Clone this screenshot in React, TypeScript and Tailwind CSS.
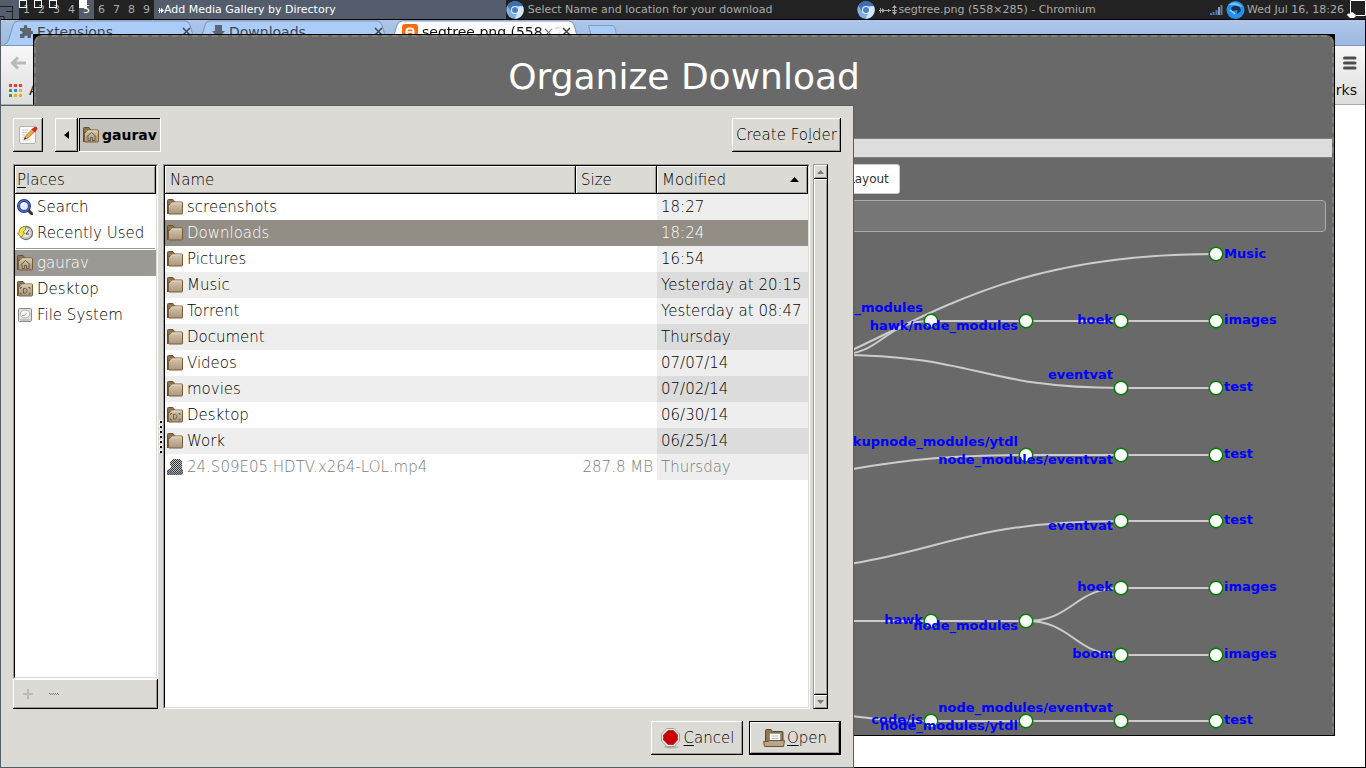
import React from "react";

const BEVEL_OUT =
  "bg-[#dcdad5] shadow-[inset_-1px_-1px_0_#000,inset_1px_1px_0_#fff,inset_-2px_-2px_0_#9e9b95]";

/* ---------- icons ---------- */

type FolderKind = "plain" | "home" | "desktop";

function FolderIcon({ kind = "plain" }: { kind?: FolderKind }) {
  return (
    <svg width="16" height="16" viewBox="0 0 16 16" className="shrink-0" aria-hidden="true">
      <defs>
        <linearGradient id={"folder-" + kind} x1="0" y1="0" x2="0" y2="1">
          <stop offset="0" stopColor="#d6c8b0" />
          <stop offset="1" stopColor="#a8957c" />
        </linearGradient>
      </defs>
      <path d="M.5 14V1.5Q.5.5 1.500.5H6L7.500 2.500V6H.5z" fill="#8f7350" stroke="#6b4f2e" />
      <path d="M3 3.500H7" stroke="#c8ae88" />
      <rect x=".5" y="5.500" width="3" height="9" fill="#84694a" stroke="#6b4f2e" />
      <path d="M1.500 6.500L4.500 3H14.500Q15.500 3 15.500 4V14Q15.500 15 14.500 15H2Q1.500 15 1.500 14z" fill={"url(#folder-" + kind + ")"} stroke="#7d5a30" />
      <path d="M5 4H14.500" stroke="#e6dcc8" />
      {kind === "home" && (
        <path d="M3.500 10L8.500 5.500 13.500 10M5 9.500V13.500H7.500V10.500H9.500V13.500H12V9.500" fill="none" stroke="#6d5c46" />
      )}
      {kind === "desktop" && (
        <path d="M3.500 8V6.500H5M11.500 6.500H13V8M3.500 11.500V13H5M11.500 13H13V11.500M6.500 7.500H8.500Q10 8 10 9.500 10 11.500 8.500 12H6.500z" fill="none" stroke="#6d5c46" />
      )}
    </svg>
  );
}

function SearchIcon() {
  return (
    <svg width="16" height="16" viewBox="0 0 16 16" className="shrink-0" aria-hidden="true">
      <path d="M11 11L15 15" stroke="#333" strokeWidth="3" strokeLinecap="round" />
      <circle cx="7" cy="7" r="5.500" fill="#dfe8f5" stroke="#20306e" strokeWidth="3" />
      <circle cx="7" cy="7" r="5.500" fill="none" stroke="#4a66c4" strokeWidth="1.500" />
      <path d="M4.500 7Q5 4.500 7.500 4.500" fill="none" stroke="#fff" strokeWidth="1.500" />
    </svg>
  );
}

function RecentIcon() {
  return (
    <svg width="16" height="16" viewBox="0 0 16 16" className="shrink-0" aria-hidden="true">
      <circle cx="9" cy="8" r="6.500" fill="#e4e4e0" stroke="#70726e" strokeWidth="1.300" />
      <circle cx="9" cy="8" r="5" fill="none" stroke="#b8bab4" />
      <path d="M9 9L12 5M9 9H12" stroke="#444" />
      <path d="M.5 8L4 12 8 8H6Q6 5.500 8.500 5V1.500Q2 2 2 8z" fill="#f4e04a" stroke="#a08a10" strokeWidth=".8" />
    </svg>
  );
}

function DriveIcon() {
  return (
    <svg width="16" height="16" viewBox="0 0 16 16" className="shrink-0" aria-hidden="true">
      <rect x="1.500" y="1.500" width="13" height="13" rx="1" fill="#e0e0de" stroke="#8a8c88" />
      <ellipse cx="8" cy="7" rx="4.800" ry="4" fill="#f6f6f5" stroke="#b4b6b2" />
      <path d="M5 8.500Q8 9.500 9.500 6" fill="none" stroke="#9a9c98" />
      <path d="M3 13H13" stroke="#a9aba7" />
    </svg>
  );
}

function VideoIcon() {
  return (
    <svg width="16" height="16" viewBox="0 0 16 16" className="shrink-0" aria-hidden="true">
      <defs>
        <pattern id="stipple" width="2" height="2" patternUnits="userSpaceOnUse">
          <rect width="2" height="2" fill="#c4c4c4" />
          <rect width="1" height="1" fill="#333" />
          <rect x="1" y="1" width="1" height="1" fill="#333" />
        </pattern>
      </defs>
      <path d="M3 3L6 0H12L15 3V8L16 11V14L14 16H0V11L4 9z" fill="url(#stipple)" shapeRendering="crispEdges" />
      <path d="M0 11L9 13 16 11V14L14 16H0z" fill="#5b6880" opacity=".5" />
    </svg>
  );
}

function PencilIcon() {
  return (
    <svg width="20" height="20" viewBox="0 0 20 20" aria-hidden="true">
      <rect x="1.500" y="1.500" width="16" height="17" rx="1.500" fill="#fafafa" stroke="#b4b4b0" />
      <path d="M4 5H10M4 7.500H9M4 10H7M4 12.500H6M4 15H12" stroke="#cfcfcd" />
      <path d="M6 14.500L7.500 11 15 3.500 17.500 6 10 13z" fill="#f4a840" stroke="#a8621a" strokeWidth=".7" />
      <path d="M6 14.500L7 12 8.500 13.500z" fill="#333" />
      <path d="M14 4.500L16 2.500Q18 1.500 19 3 19.500 4.500 16.500 7z" fill="#d92b2b" stroke="#a01515" strokeWidth=".6" />
    </svg>
  );
}

function StopIcon() {
  return (
    <svg width="22" height="22" viewBox="0 0 22 22" aria-hidden="true">
      <ellipse cx="11" cy="20" rx="7" ry="1.500" fill="#b3b1ac" />
      <path d="M7 1.500H14L19.500 7V14L14 19.500H7L1.500 14V7z" fill="#f4f4f2" stroke="#a0a09c" />
      <path d="M8 3.500H13.500L17.500 8V13L13.500 17.500H8L3.500 13V8z" fill="#cc0000" stroke="#a00000" strokeWidth=".6" />
    </svg>
  );
}

function OpenIcon() {
  return (
    <svg width="22" height="22" viewBox="0 0 22 22" aria-hidden="true">
      <path d="M2.500 18V3.500Q2.500 2.500 3.500 2.500H8L9.500 4.500H19Q20 4.500 20 5.500V17z" fill="#8e7555" stroke="#5e482d" />
      <path d="M6.500 6.500H17.500V15H6.500z" fill="#fff" stroke="#9a9a96" />
      <path d="M8.500 9H15.500M8.500 11.500H15.500" stroke="#b8b8b4" />
      <path d="M.5 14.500H5L6.500 13.500H21.500L20.500 19.500H1.500z" fill="#b9a68a" stroke="#6d5638" />
    </svg>
  );
}

function ChromiumIcon() {
  return (
    <svg width="18" height="18" viewBox="0 0 18 18" className="shrink-0" aria-hidden="true">
      <circle cx="9" cy="9" r="8.700" fill="#7fb0e0" />
      <path d="M9 9V.3A8.700 8.700 0 0 0 1.400 4.800L5.500 11z" fill="#4275b6" />
      <path d="M1.400 4.800A8.700 8.700 0 0 1 16.800 5.200H9z" fill="#3d6eb0" />
      <path d="M16.800 5.200A8.700 8.700 0 0 1 8.500 17.700L12.500 10V5.200z" fill="#d5e6f7" />
      <circle cx="9" cy="9" r="4" fill="#eef5fc" />
      <circle cx="9" cy="9" r="3" fill="#4a7fc4" />
    </svg>
  );
}

/* ---------- status bar ---------- */

const TAGS = [
  { n: 1, mark: "open" },
  { n: 2, mark: "open" },
  { n: 3, mark: "open" },
  { n: 4, mark: "" },
  { n: 5, mark: "full" },
  { n: 6, mark: "" },
  { n: 7, mark: "" },
  { n: 8, mark: "" },
  { n: 9, mark: "" },
];

function StatusBar() {
  return (
    <header className="flex h-[19px] items-stretch bg-[#222222] text-[11px] leading-[18px] text-[#aaaaaa]">
      <button aria-label="Layout" className="w-[19px] bg-[#535d6c]">
        <svg width="19" height="19" viewBox="0 0 19 19" aria-hidden="true">
          <path d="M0 6.500H13M12.500 6V19M6 11.500H13M0 16.500H4V19" fill="none" stroke="#222" />
        </svg>
      </button>
      <nav className="flex" aria-label="Tags">
        {TAGS.map((t) => (
          <button
            key={t.n}
            className={
              t.mark === "full"
                ? "relative w-[15px] bg-[#535d6c] text-center text-white"
                : "relative w-[15px] text-center"
            }
          >
            {t.mark === "open" && <span className="absolute left-0 top-0 h-2 w-2 border border-white" />}
            {t.mark === "full" && <span className="absolute left-0 top-0 h-2 w-2 bg-white" />}
            {t.n}
          </button>
        ))}
      </nav>
      <div className="flex min-w-0 flex-1">
        <button className="flex min-w-0 flex-1 items-center overflow-hidden bg-[#535d6c] whitespace-nowrap text-white">
          <svg width="10" height="8" viewBox="0 0 10 8" className="shrink-0" aria-hidden="true">
            <path d="M4 4.500H8M5.500 2V7M7.500 2.500V6.500" stroke="#fff" fill="none" />
            <path d="M7 2L10 4.500 7 7z" fill="#fff" />
          </svg>
          Add Media Gallery by Directory
        </button>
        <button className="flex min-w-0 flex-1 items-center gap-1 overflow-hidden whitespace-nowrap">
          <ChromiumIcon />
          <span>Select Name and location for your download</span>
        </button>
        <button className="flex min-w-0 flex-1 items-center gap-1 overflow-hidden whitespace-nowrap">
          <ChromiumIcon />
          <span className="flex items-center">
            <svg width="19" height="10" viewBox="0 0 19 10" aria-hidden="true">
              <path d="M0 5.500H12M1.500 3V8M9.500 4V7M15.500 1V9M13 5.500H18" stroke="#aaa" fill="none" />
              <path d="M3 3L6 5.500 3 8zM13 3L15.500 0 18 3zM13 7L15.500 10 18 7z" fill="#aaa" />
            </svg>
            segtree.png (558×285) - Chromium
          </span>
        </button>
      </div>
      <div className="flex items-center whitespace-nowrap">
        <svg width="17" height="14" viewBox="0 0 17 14" aria-hidden="true">
          <path d="M2 12V10M4.500 12V9M7.500 12V7" stroke="#4a78c0" strokeWidth="2" />
          <path d="M10 12V4" stroke="#7f9fd0" strokeWidth="2" />
          <path d="M12.500 12V2" stroke="#777" strokeWidth="2" />
        </svg>
        <svg width="19" height="18" viewBox="0 0 19 18" aria-hidden="true">
          <circle cx="9.500" cy="9" r="9" fill="#2492e8" />
          <path d="M5 7Q9 3 14 6.500L15 10 11 13 11.500 9 6 10z" fill="#17304f" />
          <path d="M2 4Q9 -2 17 6L9 4z" fill="#6cc4fa" />
          <path d="M4 9L9 13" stroke="#9bd4fa" strokeWidth="1.500" />
        </svg>
        <time className="pl-[2px]">Wed Jul 16, 18:26</time>
        <svg width="22" height="19" viewBox="0 0 22 19" className="self-start" aria-hidden="true">
          <path d="M6.500 13V.5H21.500V15.500H12" fill="none" stroke="#fff" />
          <path d="M3 15Q3 13 6 13.500 8 11 10 13.500 12 14 12 16L10 18H6z" fill="#fff" />
        </svg>
      </div>
    </header>
  );
}

/* ---------- browser behind ---------- */

function Tab({ title, active, icon }: { title: string; active?: boolean; icon: React.ReactNode }) {
  return (
    <div className="relative -mr-2 flex h-[25px] w-[200px] items-center pb-[2px]">
      <svg
        className="absolute inset-0 h-full w-full"
        viewBox="0 0 200 25"
        preserveAspectRatio="none"
        aria-hidden="true"
      >
        <path
          d="M0 25Q4 23 5 19L9 5Q10 1 14 1H181Q185 1 186 5L190 19Q191 23 195 25"
          fill={active ? "#fbfbfb" : "#abccf7"}
          stroke="#7e93b4"
        />
      </svg>
      <button
        className={
          active
            ? "relative ml-[14px] flex w-[160px] items-center gap-1 overflow-hidden mask-r-from-85% text-left text-[14px] leading-[20px] whitespace-nowrap text-[#111]"
            : "relative ml-4 flex w-[162px] items-center gap-1 text-left text-[14px] leading-[20px] whitespace-nowrap text-[#3c4656]"
        }
      >
        {icon}
        {title}
      </button>
      <button aria-label={"Close " + title} className="relative w-3">
        <svg width="9" height="9" viewBox="0 0 9 9" aria-hidden="true">
          <path d="M1 1L8 8M8 1L1 8" stroke="#444" strokeWidth="1.500" />
        </svg>
      </button>
    </div>
  );
}

const APP_COLORS = [
  "bg-[#ee3b33]", "bg-[#ee3b33]", "bg-[#ee3b33]",
  "bg-[#3b9b50]", "bg-[#2a88f5]", "bg-[#f5a913]",
  "bg-[#3b9b50]", "bg-[#f5a913]", "bg-[#f5a913]",
];

function Browser() {
  return (
    <section className="flex flex-1 flex-col border border-black border-l-[#535d6c] bg-white" aria-label="Chromium">
      <div className="flex h-[25px] items-stretch bg-linear-to-b from-[#aec7ea] to-[#9db9e0] pl-[3px]">
        <Tab
          title="Extensions"
          icon={
            <svg width="13" height="13" viewBox="0 0 13 13" aria-hidden="true">
              <path d="M0 3H4Q3 0 5.500 0T7 3H11V6Q13 5 13 7.500T11 9V13H7.500Q8 10.500 6 10.500T4.500 13H0V9Q2.500 9.500 2.500 7.500T0 6z" fill="#5b6470" />
            </svg>
          }
        />
        <Tab
          title="Downloads"
          icon={
            <svg width="13" height="13" viewBox="0 0 13 13" aria-hidden="true">
              <path d="M3 0H10V6H13L6.500 13 0 6H3z" fill="#5b6470" />
            </svg>
          }
        />
        <Tab
          active
          title="segtree.png (558×285)"
          icon={
            <svg width="16" height="16" viewBox="0 0 16 16" className="shrink-0" aria-hidden="true">
              <rect width="16" height="16" rx="3" fill="#fb6b0a" />
              <rect x="4.500" y="4.500" width="7" height="7" rx="2.500" fill="none" stroke="#fff" strokeWidth="2" />
              <path d="M5 8H11" stroke="#fff" strokeWidth="1.500" />
            </svg>
          }
        />
        <svg width="30" height="18" viewBox="0 0 30 18" className="ml-2 mt-1" aria-hidden="true">
          <path d="M.5 1.500H24Q26 1.500 27 4L29.500 15Q29.500 17 27 17H7Q5 17 4 14z" fill="#a9cbf7" stroke="#7e9cc6" />
        </svg>
      </div>
      <div className="flex h-[60px] flex-col border-y border-t-[#7f97bc] border-b-[#a9a9a9] bg-linear-to-b from-[#f8f8f8] to-[#dddddd] text-[14px] leading-[20px] text-[#111]">
        <div className="flex h-[34px] items-center justify-between px-2">
          <button aria-label="Back" className="ml-px">
            <svg width="18" height="14" viewBox="0 0 18 14" aria-hidden="true">
              <path d="M16 7H3M8 1.500L2.500 7 8 12.500" fill="none" stroke="#b9b9b9" strokeWidth="3" />
            </svg>
          </button>
          <button aria-label="Menu">
            <svg width="14" height="14" viewBox="0 0 14 14" aria-hidden="true">
              <path d="M1.500 2H12M1.500 7H12M1.500 12H12" stroke="#4d4d4d" strokeWidth="3" strokeLinecap="round" />
            </svg>
          </button>
        </div>
        <div className="flex items-center justify-between px-2">
          <button className="flex items-center gap-[7px]">
            <span className="grid grid-cols-3 gap-[2px]">
              {APP_COLORS.map((c, i) => (
                <span key={i} className={"h-[3px] w-[3px] " + c} />
              ))}
            </span>
            Apps
          </button>
          <button>Other bookmarks</button>
        </div>
      </div>
    </section>
  );
}

/* ---------- organizer window ---------- */

type Pt = [number, number];

const LINKS: [Pt, Pt][] = [
  [[551, 416], [1216, 254]],
  [[836, 355], [931, 321]],
  [[836, 355], [1121, 388]],
  [[931, 321], [1026, 321]],
  [[1026, 321], [1121, 321]],
  [[1121, 321], [1216, 321]],
  [[1121, 388], [1216, 388]],
  [[646, 489], [1026, 455]],
  [[1026, 455], [1121, 455]],
  [[1121, 455], [1216, 455]],
  [[741, 571], [1121, 521]],
  [[1121, 521], [1216, 521]],
  [[836, 621], [931, 621]],
  [[931, 621], [1026, 621]],
  [[1026, 621], [1121, 588]],
  [[1026, 621], [1121, 655]],
  [[1121, 588], [1216, 588]],
  [[1121, 655], [1216, 655]],
  [[741, 706], [931, 721]],
  [[931, 721], [1026, 721]],
  [[1026, 721], [1121, 721]],
  [[1121, 721], [1216, 721]],
];

const NODES: Pt[] = [
  [1216, 254],
  [931, 321], [1026, 321], [1121, 321], [1216, 321],
  [1121, 388], [1216, 388],
  [1026, 455], [1121, 455], [1216, 455],
  [1121, 521], [1216, 521],
  [1121, 588], [1216, 588],
  [931, 621], [1026, 621],
  [1121, 655], [1216, 655],
  [931, 721], [1026, 721], [1121, 721], [1216, 721],
];

const LABELS: [string, number, number, "start" | "end"][] = [
  ["Music", 1224, 258, "start"],
  ["node_modules", 923, 312, "end"],
  ["hawk/node_modules", 1018, 330, "end"],
  ["hoek", 1113, 324, "end"],
  ["images", 1224, 324, "start"],
  ["eventvat", 1113, 379, "end"],
  ["test", 1224, 391, "start"],
  ["backupnode_modules/ytdl", 1018, 446, "end"],
  ["node_modules/eventvat", 1113, 464, "end"],
  ["test", 1224, 458, "start"],
  ["eventvat", 1113, 530, "end"],
  ["test", 1224, 524, "start"],
  ["hoek", 1113, 591, "end"],
  ["images", 1224, 591, "start"],
  ["hawk", 923, 624, "end"],
  ["node_modules", 1018, 630, "end"],
  ["boom", 1113, 658, "end"],
  ["images", 1224, 658, "start"],
  ["code/js", 923, 724, "end"],
  ["node_modules/ytdl", 1018, 730, "end"],
  ["node_modules/eventvat", 1113, 712, "end"],
  ["test", 1224, 724, "start"],
];

function Tree() {
  return (
    <svg className="block min-h-0 w-full flex-1" role="img" aria-label="Folder tree">
      <g transform="translate(-36 -240)">
        <g fill="none" stroke="#cccccc" strokeWidth="2">
          {LINKS.map(([a, b], i) => {
            const m = (a[0] + b[0]) / 2;
            return <path key={i} d={`M${a[0]} ${a[1]}C${m} ${a[1]} ${m} ${b[1]} ${b[0]} ${b[1]}`} />;
          })}
        </g>
        <g fill="#ffffff" stroke="#008000" strokeWidth="1.500">
          {NODES.map(([x, y], i) => (
            <circle key={i} cx={x} cy={y} r="6.750" />
          ))}
        </g>
        <g className="fill-[#0000ff] text-[13px] font-bold">
          {LABELS.map(([t, x, y, anchor], i) => (
            <text key={i} x={x} y={y} textAnchor={anchor}>
              {t}
            </text>
          ))}
        </g>
      </g>
    </svg>
  );
}

function Organizer() {
  return (
    <section className="absolute top-[34px] right-[31px] bottom-8 left-[33px] flex border border-black bg-black">
      <div className="flex min-w-0 flex-1 flex-col rounded-t-lg border-2 border-b-0 border-dashed border-[#808278] bg-[#696969]">
        <h1 className="pt-[19px] text-center text-[36px] leading-[42px] text-white">Organize Download</h1>
        <div className="mt-10 h-5 border-y border-[#808080] bg-[#dddddd]" />
        <div className="mt-[6px] flex">
          <button className="ml-[801px] h-[30px] rounded-[3px] border border-[#cccccc] bg-white px-[10px] text-[12px] text-[#333]">
            Layout
          </button>
        </div>
        <input
          aria-label="Path"
          className="mx-[6px] mt-[6px] h-8 rounded-[4px] border border-[#aaaaaa] bg-[#777777] px-2 text-white"
        />
        <div className="h-2" />
        <Tree />
      </div>
    </section>
  );
}

/* ---------- file chooser ---------- */

const FILES: { name: string; kind: FolderKind | "video"; size?: string; when: string }[] = [
  { name: "screenshots", kind: "plain", when: "18:27" },
  { name: "Downloads", kind: "plain", when: "18:24" },
  { name: "Pictures", kind: "plain", when: "16:54" },
  { name: "Music", kind: "plain", when: "Yesterday at 20:15" },
  { name: "Torrent", kind: "plain", when: "Yesterday at 08:47" },
  { name: "Document", kind: "plain", when: "Thursday" },
  { name: "Videos", kind: "plain", when: "07/07/14" },
  { name: "movies", kind: "plain", when: "07/02/14" },
  { name: "Desktop", kind: "desktop", when: "06/30/14" },
  { name: "Work", kind: "plain", when: "06/25/14" },
  { name: "24.S09E05.HDTV.x264-LOL.mp4", kind: "video", size: "287.8 MB", when: "Thursday" },
];

const HEAD =
  "h-7 border-r border-b border-black px-[5px] text-left font-extralight shadow-[inset_1px_1px_0_#fff,inset_-1px_-1px_0_#9e9b95]";

function FileTable() {
  return (
    <div className="min-w-0 flex-1 border-t border-l border-t-[#9e9b95] border-l-[#9e9b95] border-r border-b border-r-white border-b-white">
      <div className="h-full border-t border-l border-black border-r border-b border-r-[#dcdad5] border-b-[#dcdad5] bg-white">
        <table className="w-full table-fixed border-separate border-spacing-0">
          <colgroup>
            <col />
            <col className="w-[81px]" />
            <col className="w-[151px]" />
          </colgroup>
          <thead>
            <tr className="bg-[#dcdad5]">
              <th className={HEAD}>Name</th>
              <th className={HEAD}>Size</th>
              <th className={HEAD}>
                <span className="flex items-center justify-between pr-[3px]">
                  Modified
                  <svg width="9" height="5" viewBox="0 0 9 5" aria-hidden="true">
                    <path d="M0 5L4.500 0 9 5z" />
                  </svg>
                </span>
              </th>
            </tr>
          </thead>
          <tbody>
            {FILES.map((f, i) => {
              const selected = i === 1;
              const odd = i % 2 === 1;
              const row = selected ? "bg-[#928e86] text-white" : odd ? "bg-[#eeeeee]" : "bg-white";
              const sorted = selected ? "" : odd ? "bg-[#dcdcdc]" : "bg-[#eeeeee]";
              const tone = f.kind === "video" ? " text-[#7a7a7a]" : "";
              return (
                <tr key={f.name} className={row + tone}>
                  <td className="h-[26px] pl-[2px]">
                    <span className="flex items-center gap-1 whitespace-nowrap">
                      {f.kind === "video" ? <VideoIcon /> : <FolderIcon kind={f.kind} />}
                      {f.name}
                    </span>
                  </td>
                  <td className="pr-1 text-right whitespace-nowrap">{f.size}</td>
                  <td className={"pl-1 whitespace-nowrap " + sorted}>{f.when}</td>
                </tr>
              );
            })}
          </tbody>
        </table>
      </div>
    </div>
  );
}

function Place({ icon, label, selected }: { icon: React.ReactNode; label: string; selected?: boolean }) {
  return (
    <button
      className={
        selected
          ? "flex h-[26px] w-full items-center gap-1 bg-[#9b9993] pl-[2px] text-left text-white"
          : "flex h-[26px] w-full items-center gap-1 pl-[2px] text-left"
      }
    >
      {icon}
      {label}
    </button>
  );
}

function Places() {
  return (
    <div className="flex w-[145px] flex-col">
      <div className="flex min-h-0 flex-1 flex-col border-t border-l border-t-[#9e9b95] border-l-[#9e9b95] border-r border-b border-r-white border-b-white">
        <div className="flex-1 border-t border-l border-black border-r border-b border-r-[#dcdad5] border-b-[#dcdad5] bg-white">
          <div className="flex h-7 items-center border-r border-b border-black bg-[#dcdad5] px-[2px] shadow-[inset_1px_1px_0_#fff,inset_-1px_-1px_0_#9e9b95]">
            <span className="underline underline-offset-2">P</span>laces
          </div>
          <Place icon={<SearchIcon />} label="Search" />
          <Place icon={<RecentIcon />} label="Recently Used" />
          <hr className="mx-px mt-[2px] mb-px border-[#9e9b95]" />
          <Place icon={<FolderIcon kind="home" />} label="gaurav" selected />
          <Place icon={<FolderIcon kind="desktop" />} label="Desktop" />
          <Place icon={<DriveIcon />} label="File System" />
        </div>
      </div>
      <div className={"flex h-[30px] items-center gap-4 pl-[10px] " + BEVEL_OUT}>
        <button aria-label="Add place" disabled>
          <svg width="10" height="10" viewBox="0 0 10 10" aria-hidden="true">
            <path d="M0 5H10M5 0V10" stroke="#bcbab6" strokeWidth="2" />
          </svg>
        </button>
        <button aria-label="Remove place" disabled>
          <svg width="10" height="10" viewBox="0 0 10 10" aria-hidden="true">
            <path d="M0 4.500H10" stroke="#777" strokeDasharray="1 1" />
            <path d="M1 5.500H10" stroke="#888" strokeDasharray="1 1" />
          </svg>
        </button>
      </div>
    </div>
  );
}

function Handle() {
  return (
    <div className="flex w-[5px] flex-col items-center justify-center" aria-hidden="true">
      <svg width="3" height="33" viewBox="0 0 3 33">
        {[0, 5, 10, 15, 20, 25, 30].map((y) => (
          <g key={y}>
            <rect y={y} width="3" height="3" fill="#fff" />
            <rect x="1" y={y + 1} width="2" height="2" fill="#000" />
          </g>
        ))}
      </svg>
    </div>
  );
}

function ScrollBar() {
  const arrow =
    "flex h-[14px] items-center justify-center bg-[#dcdad5] shadow-[inset_1px_1px_0_#fff,inset_-1px_-1px_0_#9e9b95]";
  return (
    <div className="ml-[3px] flex w-[15px] flex-col border border-t-[#9e9b95] border-r-black border-b-black border-l-[#9e9b95]">
      <button aria-label="Scroll up" className={arrow + " border-b border-black"}>
        <svg width="7" height="4" viewBox="0 0 7 4" aria-hidden="true">
          <path d="M0 4L3.500 0 7 4z" fill="#777" />
        </svg>
      </button>
      <div className="flex-1 bg-[#dcdad5] shadow-[inset_1px_1px_0_#fff,inset_-1px_-1px_0_#9e9b95]" />
      <button aria-label="Scroll down" className={arrow + " border-t border-black"}>
        <svg width="7" height="4" viewBox="0 0 7 4" aria-hidden="true">
          <path d="M0 0L3.500 4 7 0z" fill="#777" />
        </svg>
      </button>
    </div>
  );
}

function FileChooser() {
  return (
    <section
      role="dialog"
      aria-label="Add Media Gallery by Directory"
      className="absolute top-[105px] bottom-0 left-0 flex w-[854px] max-w-full flex-col border border-[#535d6c] bg-[#dcdad5] p-3 text-[15px] leading-[20px] font-extralight text-black"
    >
      <div className="flex h-[34px] items-stretch">
        <button aria-label="Type a file name" className={"flex w-[30px] items-center justify-center " + BEVEL_OUT}>
          <PencilIcon />
        </button>
        <button aria-label="Back" className={"ml-3 flex w-[23px] items-center justify-center " + BEVEL_OUT}>
          <svg width="5" height="8" viewBox="0 0 5 8" aria-hidden="true">
            <path d="M5 0V8L0 4z" />
          </svg>
        </button>
        <button className="ml-px flex items-center gap-[3px] bg-[#c4c2bd] px-1 text-[14px] font-bold shadow-[inset_-1px_-1px_0_#fff,inset_1px_1px_0_#000]">
          <FolderIcon kind="home" />
          gaurav
        </button>
        <button className={"ml-auto px-1 " + BEVEL_OUT}>
          Create Fo<span className="underline underline-offset-2">l</span>der
        </button>
      </div>
      <div className="mt-3 flex min-h-0 flex-1 items-stretch pr-[13px]">
        <Places />
        <Handle />
        <FileTable />
        <ScrollBar />
      </div>
      <div className="mt-3 flex h-[34px] justify-end gap-[6px]">
        <button className={"flex w-[92px] items-center justify-center gap-[2px] " + BEVEL_OUT}>
          <StopIcon />
          <span>
            <span className="underline underline-offset-2">C</span>ancel
          </span>
        </button>
        <button className="flex w-[92px] items-center justify-center gap-[2px] border border-black bg-[#dcdad5] shadow-[inset_-1px_-1px_0_#000,inset_1px_1px_0_#fff,inset_-2px_-2px_0_#9e9b95]">
          <OpenIcon />
          <span>
            <span className="underline underline-offset-2">O</span>pen
          </span>
        </button>
      </div>
    </section>
  );
}

export default function App() {
  return (
    <main className="relative flex min-h-screen flex-col overflow-hidden bg-[#222222] font-['DejaVu_Sans',sans-serif]">
      <StatusBar />
      <Browser />
      <Organizer />
      <FileChooser />
    </main>
  );
}
